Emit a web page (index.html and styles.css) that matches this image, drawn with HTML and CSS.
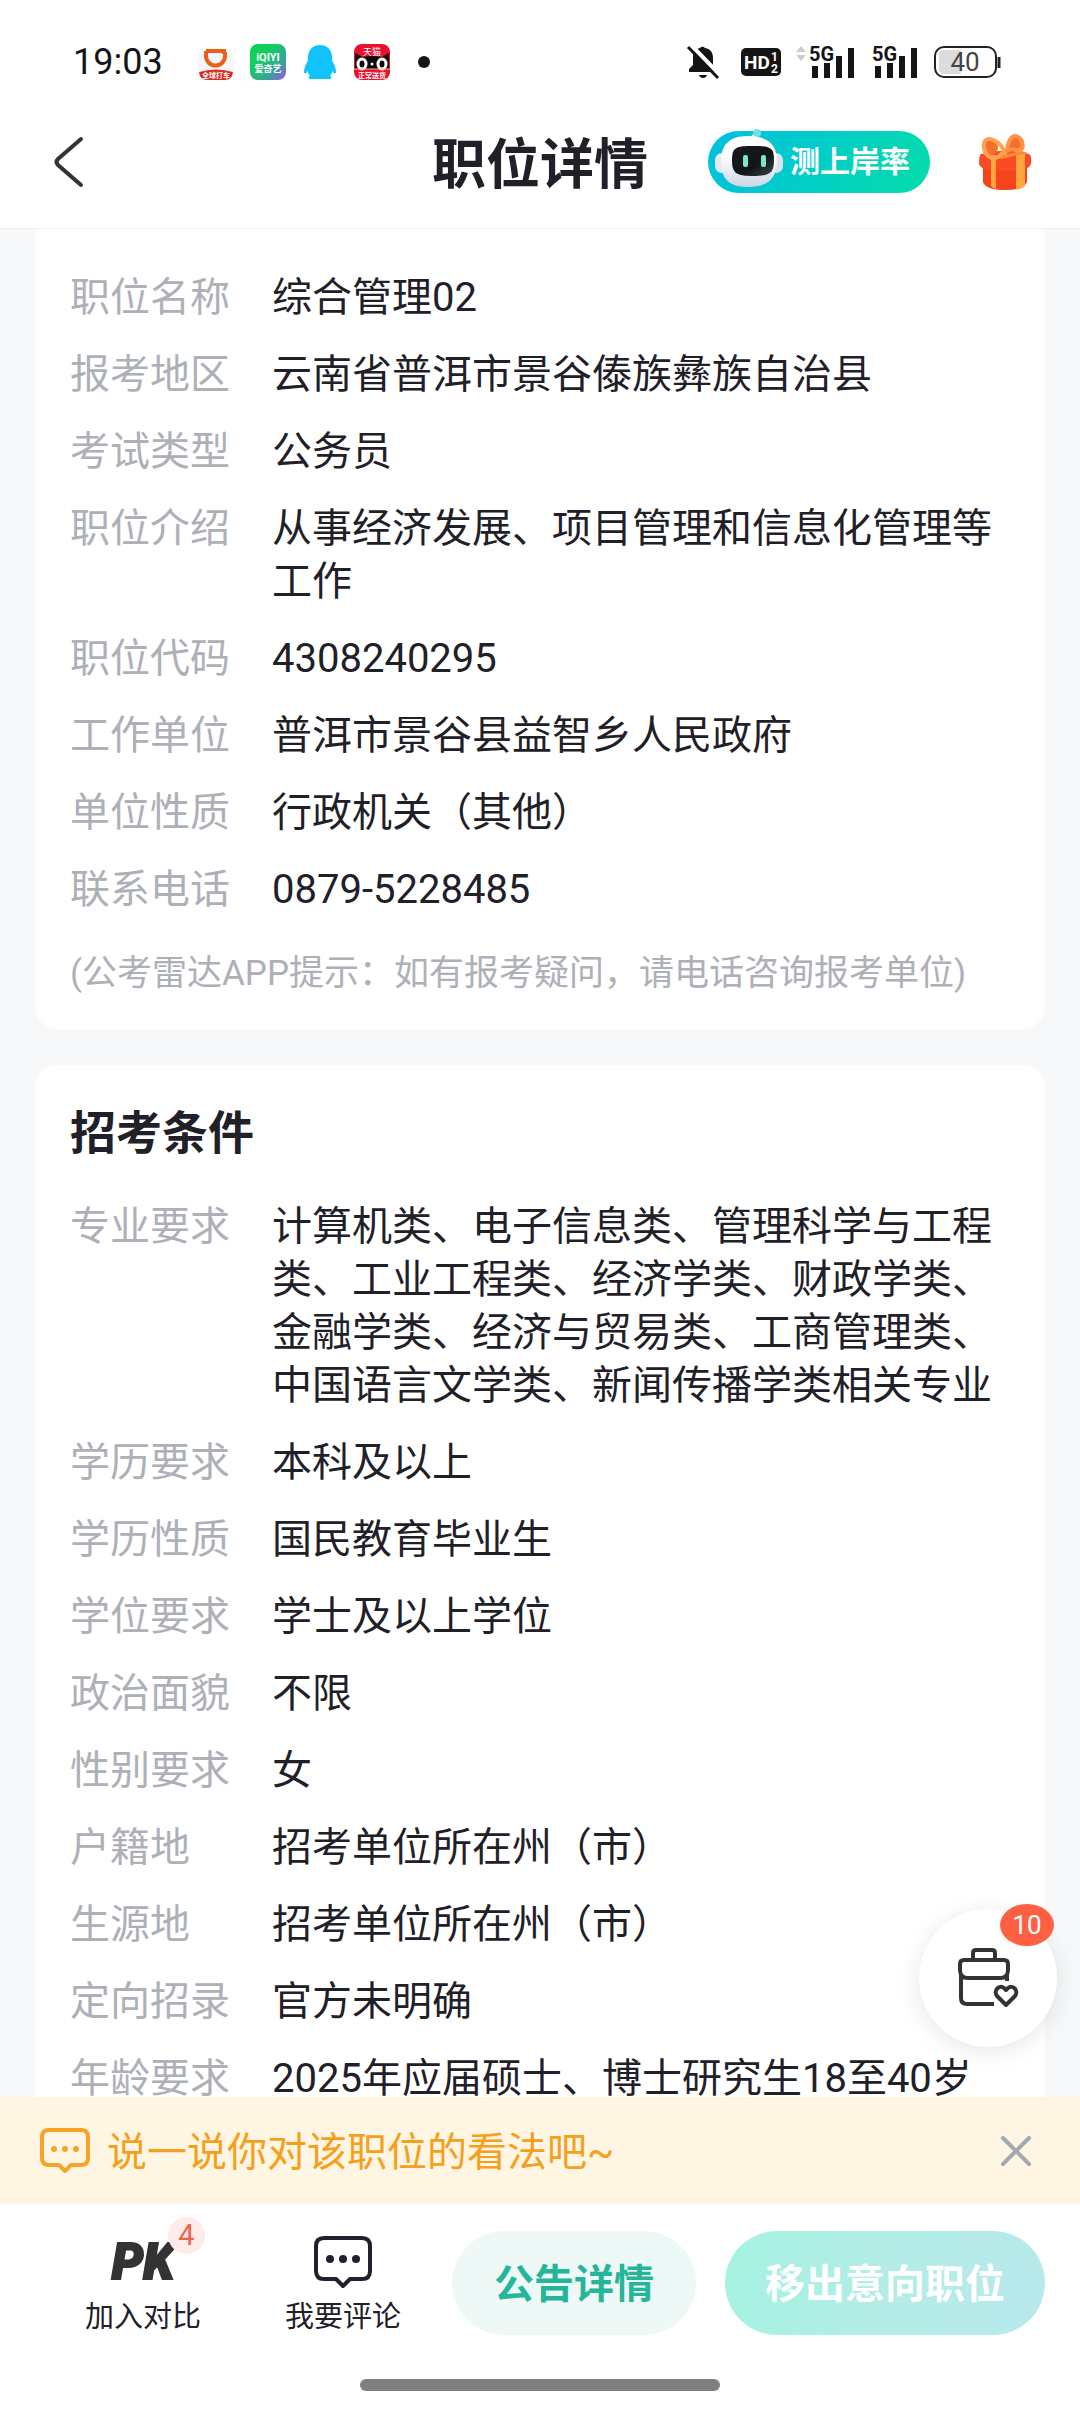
FILE: index.html
```html
<!DOCTYPE html>
<html lang="zh-CN">
<head>
    <meta charset="UTF-8">
    <meta name="viewport" content="width=device-width, initial-scale=1.0">
    <title>职位详情</title>
    <link rel="stylesheet" href="styles.css">
</head>
<body>

<header class="header">
    <div class="status-bar">
        <span class="time">19:03</span>
        <div class="app-icons">
            <svg width="36" height="36" viewBox="0 0 36 36">
                <rect x="0" y="4" width="36" height="28" rx="6" fill="#f7f7f7"/>
                <path d="M8 7h18v3M8 7v5a9.500 9.500 0 0 0 19 0V8" fill="none" stroke="#e8601c" stroke-width="4"/>
                <path d="M1 28q17-5 34 0q-1 8-8 8H9q-7 0-8-8z" fill="#dc2a20"/>
                <text x="18" y="34" font-size="7" font-weight="700" fill="#fff" text-anchor="middle">全球打车</text>
            </svg>
            <svg width="36" height="36" viewBox="0 0 36 36">
                <defs>
                    <linearGradient id="iqiyi" x1="0" y1="0" x2="1" y2="1">
                        <stop offset="0.3" stop-color="#0fd05c"/>
                        <stop offset="0.7" stop-color="#36a597"/>
                        <stop offset="1" stop-color="#a44cf0"/>
                    </linearGradient>
                </defs>
                <rect width="36" height="36" rx="8" fill="url(#iqiyi)"/>
                <text x="18" y="17" font-size="11" font-weight="700" fill="#fff" text-anchor="middle">iQIYI</text>
                <text x="18" y="28" font-size="9" font-weight="700" fill="#fff" text-anchor="middle">爱奇艺</text>
            </svg>
            <svg width="36" height="36" viewBox="0 0 36 36">
                <path d="M18 1C10 1 6 7 6 13v3c-2 4-4 8-4 12 0 2 2 2 4-1 0 2 1 4 2 5-2 0-2 3 0 3h20c2 0 2-3 0-3 1-1 2-3 2-5 2 3 4 3 4 1 0-4-2-8-4-12v-3C30 7 26 1 18 1z" fill="#12c3fb"/>
            </svg>
            <svg width="36" height="36" viewBox="0 0 36 36">
                <rect width="36" height="36" rx="8" fill="#e8112d"/>
                <path d="M1 25V9l7 4q10-2 20 0l7-4v16z" fill="#0c0c0c"/>
                <text x="18" y="11" font-size="9" fill="#fff" text-anchor="middle">天猫</text>
                <ellipse cx="8" cy="20" rx="4" ry="5" fill="none" stroke="#fff" stroke-width="3"/>
                <ellipse cx="28" cy="20" rx="4" ry="5" fill="none" stroke="#fff" stroke-width="3"/>
                <circle cx="18" cy="20" r="1.500" fill="#fff"/>
                <path d="M0 25h36" stroke="#f6b98c" stroke-width="1"/>
                <text x="18" y="34" font-size="7" font-weight="700" fill="#fff" text-anchor="middle">正常送货</text>
            </svg>
            <span class="dot"></span>
        </div>
        <div class="system-icons">
            <svg width="32" height="34" viewBox="0 0 32 34">
                <path d="M13 3a3 3 0 0 1 5 0c6 1 8 5 8 10v8l4 4v2H2v-3l4-4v-8c0-5 2-8 7-9z" fill="#151515"/>
                <path d="M12 30h8q-1 3-4 3t-4-3z" fill="#151515"/>
                <path d="M4 0l30 31" stroke="#fff" stroke-width="4"/>
                <path d="M1 2l30 31" stroke="#151515" stroke-width="3"/>
            </svg>
            <svg class="hd" width="40" height="28" viewBox="0 0 40 28">
                <rect width="40" height="28" rx="5" fill="#151515"/>
                <text x="3" y="21" font-size="19" font-weight="700" fill="#fff">HD</text>
                <text x="30" y="13" font-size="12" font-weight="700" fill="#fff">1</text>
                <text x="30" y="25" font-size="12" font-weight="700" fill="#fff">2</text>
            </svg>
            <svg width="60" height="34" viewBox="0 0 60 34">
                <path d="M0 7l5-6 5 6zM0 10l5 6 5-6z" fill="#ccc"/>
                <text x="13" y="16" font-size="20" font-weight="700" fill="#151515">5G</text>
                <path d="M19 21v12M31 18v15M43 11v22M55 3v30" stroke="#151515" stroke-width="6"/>
            </svg>
            <svg class="signal" width="47" height="34" viewBox="13 0 47 34">
                <text x="13" y="16" font-size="20" font-weight="700" fill="#151515">5G</text>
                <path d="M19 21v12M31 18v15M43 11v22M55 3v30" stroke="#151515" stroke-width="6"/>
            </svg>
            <svg width="68" height="34" viewBox="0 0 68 34">
                <rect x="1" y="2" width="61" height="30" rx="9" fill="#fff" stroke="#222" stroke-width="2"/>
                <path d="M10 5h17v24H10q-5 0-5-5V10q0-5 5-5z" fill="#dcdcdc"/>
                <path d="M65 12v11" stroke="#222" stroke-width="3"/>
                <text x="31" y="26" font-size="26" fill="#444" text-anchor="middle">40</text>
            </svg>
        </div>
    </div>

    <nav class="nav">
        <button class="back" aria-label="返回">
            <svg width="32" height="52" viewBox="0 0 32 52">
                <path d="M28 3L5 23q-3 3 0 6l23 20" fill="none" stroke="#333" stroke-width="4" stroke-linecap="round"/>
            </svg>
        </button>
        <h1 class="title">职位详情</h1>
        <div class="nav-actions">
            <button class="rate-button">
                <svg class="robot" width="68" height="62" viewBox="0 0 68 62">
                    <defs>
                        <linearGradient id="head" x1="0" y1="0" x2="0" y2="1">
                            <stop offset="0.4" stop-color="#fff"/>
                            <stop offset="1" stop-color="#ccd5e8"/>
                        </linearGradient>
                        <linearGradient id="face" x1="0" y1="0" x2="1" y2="1">
                            <stop offset="0" stop-color="#151c20"/>
                            <stop offset="0.6" stop-color="#101518"/>
                            <stop offset="1" stop-color="#3d464c"/>
                        </linearGradient>
                    </defs>
                    <path d="M31 9q6-1 9-6l3 4-3 3z" fill="#e9f6fb"/>
                    <circle cx="42" cy="4" r="4" fill="#6fe0e0"/>
                    <rect x="0" y="24" width="14" height="20" rx="7" fill="#e4eaf4"/>
                    <rect x="54" y="24" width="14" height="20" rx="7" fill="#dbe3f0"/>
                    <path d="M33 7C52 7 62 15 62 32c0 18-10 26-29 26S6 50 6 32C6 15 15 7 33 7z" fill="url(#head)"/>
                    <path d="M38 17c17 0 21 1 21 14s-4 16-21 16-21-3-21-16 4-14 21-14z" fill="url(#face)"/>
                    <rect x="28" y="26" width="5" height="12" rx="2" fill="#7ee6c6"/>
                    <rect x="46" y="26" width="5" height="12" rx="2" fill="#7ee6c6"/>
                </svg>
                <span>测上岸率</span>
            </button>
            <button aria-label="礼物">
                <svg width="54" height="58" viewBox="0 0 54 58">
                    <path d="M5 26h44v23q-3 8-22 8T5 49z" fill="#f5431b"/>
                    <path d="M3 21q24-7 48 0 3 1 2 10-2 5-8 5-18 4-36 0-6 0-8-5 0-9 2-10z" fill="#fb4a25"/>
                    <path d="M13 22h5v34q-4-1-5-3zM38 22l9-2v33q-4 3-9 4z" fill="#ffa53f"/>
                    <path d="M18 23L44 18 50 20 24 26z" fill="#fb8b35"/>
                    <ellipse cx="13" cy="14" rx="7" ry="8" fill="#f0702f"/>
                    <path d="M27 20C22 7 10 3 7 8s0 17 9 17 6-8 11-5z" fill="none" stroke="#ffa24e" stroke-width="4" stroke-linejoin="round"/>
                    <path d="M29 18C30 6 35 1 40 4s7 12 1 13-5-3-12 1z" fill="#f0702f" stroke="#ff9342" stroke-width="4" stroke-linejoin="round"/>
                </svg>
            </button>
        </div>
    </nav>
</header>

<div class="content">
    <main class="scroll">
        <section class="card card-first">
            <dl class="info">
                <dt>职位名称</dt><dd>综合管理02</dd>
                <dt>报考地区</dt><dd>云南省普洱市景谷傣族彝族自治县</dd>
                <dt>考试类型</dt><dd>公务员</dd>
                <dt>职位介绍</dt><dd>从事经济发展、项目管理和信息化管理等工作</dd>
                <dt>职位代码</dt><dd>4308240295</dd>
                <dt>工作单位</dt><dd>普洱市景谷县益智乡人民政府</dd>
                <dt>单位性质</dt><dd>行政机关（其他）</dd>
                <dt>联系电话</dt><dd>0879-5228485</dd>
            </dl>
            <p class="note">(公考雷达APP提示：如有报考疑问，请电话咨询报考单位)</p>
        </section>

        <section class="card">
            <h2 class="card-title">招考条件</h2>
            <dl class="info">
                <dt>专业要求</dt><dd>计算机类、电子信息类、管理科学与工程类、工业工程类、经济学类、财政学类、金融学类、经济与贸易类、工商管理类、中国语言文学类、新闻传播学类相关专业</dd>
                <dt>学历要求</dt><dd>本科及以上</dd>
                <dt>学历性质</dt><dd>国民教育毕业生</dd>
                <dt>学位要求</dt><dd>学士及以上学位</dd>
                <dt>政治面貌</dt><dd>不限</dd>
                <dt>性别要求</dt><dd>女</dd>
                <dt>户籍地</dt><dd>招考单位所在州（市）</dd>
                <dt>生源地</dt><dd>招考单位所在州（市）</dd>
                <dt>定向招录</dt><dd>官方未明确</dd>
                <dt>年龄要求</dt><dd>2025年应届硕士、博士研究生18至40岁</dd>
            </dl>
        </section>
    </main>

    <button class="float-button" aria-label="意向职位">
        <svg width="62" height="62" viewBox="0 0 62 62">
            <g fill="none" stroke="#333" stroke-width="4" stroke-linejoin="round">
                <path d="M16 12V6q0-3 3-3h16q3 0 3 3v6"/>
                <path d="M7 13h40q4 0 4 4v6q0 8-8 8H11q-8 0-8-8v-6q0-4 4-4z"/>
                <path d="M4 28v23q0 6 6 6h27M50 27v7"/>
                <path d="M49 58l-9-9c-4-5 2-12 7-8l2 2 2-2c5-4 11 3 7 8z"/>
            </g>
        </svg>
        <span class="float-badge">10</span>
    </button>
</div>

<footer class="footer">
    <div class="tip">
        <svg width="50" height="46" viewBox="0 0 50 46">
            <path d="M9 2h32q7 0 7 7v21q0 7-7 7H31l-6 6-6-6H9q-7 0-7-7V9q0-7 7-7z" fill="none" stroke="#f5a425" stroke-width="4" stroke-linejoin="round"/>
            <g fill="#f5a425"><circle cx="14" cy="21" r="3"/><circle cx="25" cy="21" r="3"/><circle cx="36" cy="21" r="3"/></g>
        </svg>
        <a class="tip-text" href="#">说一说你对该职位的看法吧~</a>
        <button class="close" aria-label="关闭">
            <svg width="32" height="32" viewBox="0 0 32 32">
                <path d="M3 3l26 26M29 3L3 29" stroke="#a3a8b3" stroke-width="4" stroke-linecap="round"/>
            </svg>
        </button>
    </div>

    <div class="toolbar">
        <button class="tool">
            <span class="tool-icon pk">PK<span class="pk-badge">4</span></span>
            <span>加入对比</span>
        </button>
        <button class="tool">
            <span class="tool-icon">
                <svg width="58" height="52" viewBox="0 0 58 52">
                    <path d="M10 2h38q8 0 8 8v25q0 8-8 8H36l-7 7-7-7H10q-8 0-8-8V10q0-8 8-8z" fill="none" stroke="#1f222c" stroke-width="4" stroke-linejoin="round"/>
                    <g fill="#1f222c"><circle cx="16" cy="23" r="4"/><circle cx="29" cy="23" r="4"/><circle cx="42" cy="23" r="4"/></g>
                </svg>
            </span>
            <span>我要评论</span>
        </button>
        <div class="main-buttons">
            <button class="btn btn-light">公告详情</button>
            <button class="btn btn-primary">移出意向职位</button>
        </div>
    </div>
    <div class="home-indicator"></div>
</footer>

</body>
</html>
```
FILE: styles.css
```css
* {
    box-sizing: border-box;
}
body {
    margin: 0;
    height: 100vh;
    display: flex;
    flex-direction: column;
    overflow: hidden;
    background: #f6f8fa;
    color: #1f2028;
    font-family: Roboto, "Noto Sans CJK SC", sans-serif;
    font-size: 40px;
    line-height: 53px;
}
h1, h2, p, dl, dd {
    margin: 0;
}
button {
    padding: 0;
    border: none;
    background: none;
    color: inherit;
    font-family: inherit;
    cursor: pointer;
}
svg {
    display: block;
    flex: none;
    overflow: visible;
}

/* 顶部 */
.header {
    background: #fff;
    border-bottom: 1px solid #eff1f2;
}
.status-bar {
    display: flex;
    align-items: center;
    padding: 28px 78px 0 73px;
    height: 96px;
}
.time {
    font-size: 36px;
    color: #151515;
}
.app-icons {
    display: flex;
    align-items: center;
    gap: 16px;
    margin-left: 35px;
}
.dot {
    width: 12px;
    height: 12px;
    margin-left: 12px;
    border-radius: 50%;
    background: #151515;
}
.system-icons {
    display: flex;
    align-items: center;
    margin-left: auto;
}
.hd {
    margin: 0 15px 0 22px;
}
.signal {
    margin: 0 15px 0 16px;
}
.nav {
    display: grid;
    grid-template-columns: 1fr auto 1fr;
    align-items: center;
    height: 132px;
    padding: 0 48px;
}
.back {
    justify-self: start;
    padding: 0 5px;
}
.title {
    padding-top: 8px;
    font-size: 54px;
    line-height: 72px;
    font-weight: 700;
}
.nav-actions {
    display: flex;
    align-items: center;
    justify-content: flex-end;
    gap: 48px;
}
.rate-button {
    display: flex;
    align-items: center;
    gap: 7px;
    height: 62px;
    padding: 0 20px 0 7px;
    border-radius: 31px;
    background: linear-gradient(120deg, #00bfe0, #05ddaa);
    color: #fff;
    font-size: 30px;
    line-height: 40px;
    font-weight: 700;
}
.robot {
    margin-top: -4px;
}

/* 职位信息 */
.content {
    position: relative;
    flex: 1;
    min-height: 0;
}
.scroll {
    height: 100%;
    overflow: hidden;
    display: flex;
    flex-direction: column;
    gap: 36px;
    padding: 0 35px;
}
.card {
    flex: none;
    padding: 38px 36px 32px 35px;
    border-radius: 22px;
    background: #fff;
}
.card-first {
    padding-top: 42px;
    border-radius: 0 0 22px 22px;
}
.card-title {
    margin-bottom: 37px;
    font-size: 46px;
    line-height: 60px;
    font-weight: 700;
}
.info {
    display: grid;
    grid-template-columns: 178px 1fr;
    gap: 24px;
}
.info dt {
    color: #aeb0b8;
}
.note {
    margin-top: 35px;
    color: #aeb0b8;
    font-size: 35px;
    line-height: 46px;
}
.float-button {
    position: absolute;
    right: 23px;
    bottom: 50px;
    display: flex;
    align-items: center;
    justify-content: center;
    width: 138px;
    height: 138px;
    border-radius: 50%;
    background: #fff;
    box-shadow: 0 4px 24px rgba(0, 0, 0, 0.1);
}
.float-badge {
    position: absolute;
    top: -5px;
    right: 3px;
    width: 54px;
    height: 42px;
    border-radius: 50%;
    background: #ff6044;
    color: #fff;
    font-size: 26px;
    line-height: 42px;
}

/* 底部 */
.footer {
    background: #fff;
}
.tip {
    display: flex;
    align-items: center;
    gap: 17px;
    height: 107px;
    padding: 0 48px 0 40px;
    background: #fff5e3;
}
.tip-text {
    padding-top: 4px;
    color: #f5a01c;
    text-decoration: none;
}
.close {
    margin-left: auto;
}
.toolbar {
    display: flex;
    align-items: center;
    height: 158px;
    padding: 0 35px 0 43px;
}
.tool {
    width: 200px;
    font-size: 29px;
    line-height: 40px;
}
.tool-icon {
    position: relative;
    display: flex;
    align-items: center;
    justify-content: center;
    height: 64px;
    margin-bottom: 3px;
}
.pk {
    width: 80px;
    margin: 0 auto 3px;
    color: #333;
    font-size: 50px;
    font-style: italic;
    font-weight: 900;
    -webkit-text-stroke: 2px #333;
}
.pk-badge {
    position: absolute;
    top: -13px;
    right: -22px;
    width: 37px;
    height: 37px;
    border-radius: 50%;
    background: #ffebe8;
    color: #f0644c;
    font-size: 29px;
    font-style: normal;
    font-weight: 400;
    line-height: 37px;
    -webkit-text-stroke: 0;
}
.main-buttons {
    display: flex;
    flex: 1;
    gap: 29px;
    margin-left: 9px;
}
.btn {
    height: 104px;
    padding-bottom: 4px;
    border-radius: 52px;
    font-size: 40px;
    font-weight: 700;
}
.btn-light {
    flex: 244;
    background: #eef9f7;
    color: #25b598;
}
.btn-primary {
    flex: 320;
    background: linear-gradient(100deg, #a5f3e1, #b3ece6 50%, #b8e9ec);
    color: #fff;
}
.home-indicator {
    width: 360px;
    height: 12px;
    margin: 17px auto 21px;
    border-radius: 6px;
    background: #808080;
}
```
